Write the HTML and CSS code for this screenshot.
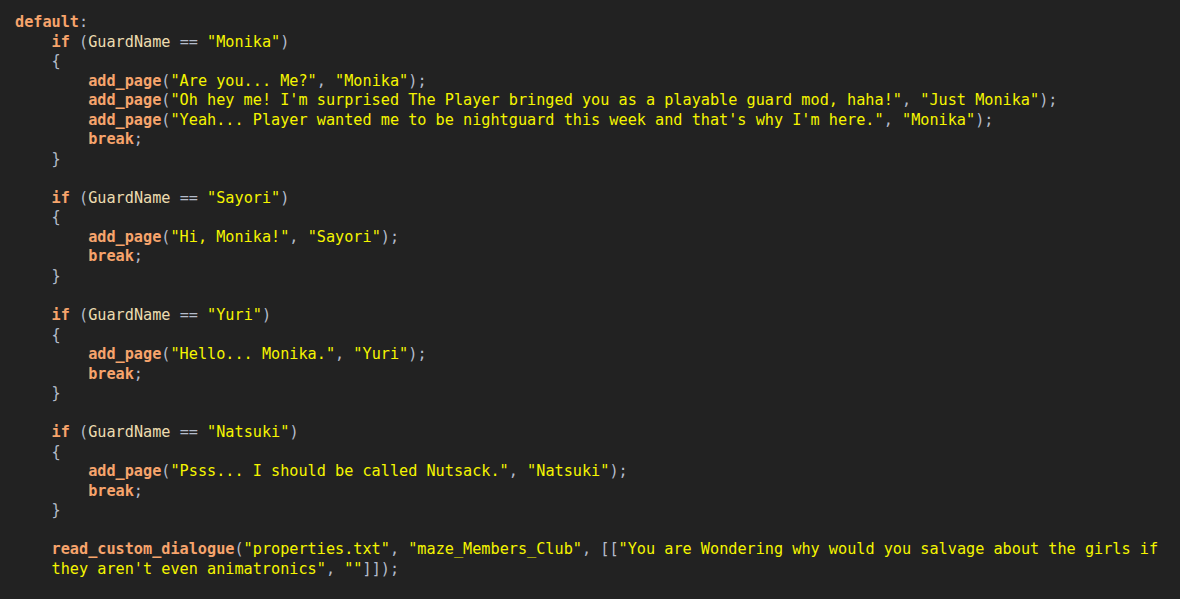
FILE: index.html
```html
<!DOCTYPE html>
<html>
<head>
<meta charset="utf-8">
<link rel="stylesheet" href="styles.css">
</head>
<body>
<div class="code">
<div class="ln"><span class="kw">default</span><span class="p">:</span></div>
<div class="ln i1"><span class="kw">if</span> <span class="p">(</span><span class="id">GuardName</span> <span class="p">==</span> <span class="s">"Monika"</span><span class="p">)</span></div>
<div class="ln i1"><span class="p">{</span></div>
<div class="ln i2"><span class="kw">add_page</span><span class="p">(</span><span class="s">"Are you... Me?"</span><span class="p">,</span> <span class="s">"Monika"</span><span class="p">);</span></div>
<div class="ln i2"><span class="kw">add_page</span><span class="p">(</span><span class="s">"Oh hey me! I'm surprised The Player bringed you as a playable guard mod, haha!"</span><span class="p">,</span> <span class="s">"Just Monika"</span><span class="p">);</span></div>
<div class="ln i2"><span class="kw">add_page</span><span class="p">(</span><span class="s">"Yeah... Player wanted me to be nightguard this week and that's why I'm here."</span><span class="p">,</span> <span class="s">"Monika"</span><span class="p">);</span></div>
<div class="ln i2"><span class="kw">break</span><span class="p">;</span></div>
<div class="ln i1"><span class="p">}</span></div>
<div class="ln"> </div>
<div class="ln i1"><span class="kw">if</span> <span class="p">(</span><span class="id">GuardName</span> <span class="p">==</span> <span class="s">"Sayori"</span><span class="p">)</span></div>
<div class="ln i1"><span class="p">{</span></div>
<div class="ln i2"><span class="kw">add_page</span><span class="p">(</span><span class="s">"Hi, Monika!"</span><span class="p">,</span> <span class="s">"Sayori"</span><span class="p">);</span></div>
<div class="ln i2"><span class="kw">break</span><span class="p">;</span></div>
<div class="ln i1"><span class="p">}</span></div>
<div class="ln"> </div>
<div class="ln i1"><span class="kw">if</span> <span class="p">(</span><span class="id">GuardName</span> <span class="p">==</span> <span class="s">"Yuri"</span><span class="p">)</span></div>
<div class="ln i1"><span class="p">{</span></div>
<div class="ln i2"><span class="kw">add_page</span><span class="p">(</span><span class="s">"Hello... Monika."</span><span class="p">,</span> <span class="s">"Yuri"</span><span class="p">);</span></div>
<div class="ln i2"><span class="kw">break</span><span class="p">;</span></div>
<div class="ln i1"><span class="p">}</span></div>
<div class="ln"> </div>
<div class="ln i1"><span class="kw">if</span> <span class="p">(</span><span class="id">GuardName</span> <span class="p">==</span> <span class="s">"Natsuki"</span><span class="p">)</span></div>
<div class="ln i1"><span class="p">{</span></div>
<div class="ln i2"><span class="kw">add_page</span><span class="p">(</span><span class="s">"Psss... I should be called Nutsack."</span><span class="p">,</span> <span class="s">"Natsuki"</span><span class="p">);</span></div>
<div class="ln i2"><span class="kw">break</span><span class="p">;</span></div>
<div class="ln i1"><span class="p">}</span></div>
<div class="ln"> </div>
<div class="ln i1"><span class="kw">read_custom_dialogue</span><span class="p">(</span><span class="s">"properties.txt"</span><span class="p">,</span> <span class="s">"maze_Members_Club"</span><span class="p">,</span> <span class="p">[[</span><span class="s">"You are Wondering why would you salvage about the girls if</span></div>
<div class="ln i1"><span class="s">they aren't even animatronics"</span><span class="p">,</span> <span class="s">""</span><span class="p">]]);</span></div>
</div>
</body>
</html>
```

FILE: styles.css
```css
html, body {
  margin: 0;
  padding: 0;
  background: #222222;
  height: 100%;
}
.code {
  padding: 13px 0 0 15px;
  font-family: "DejaVu Sans Mono", "Liberation Mono", monospace;
  font-size: 15.2px;
  line-height: 19.54px;
  color: #d0d4dc;
}
.ln {
  white-space: pre;
  height: 19.54px;
}
.i1 { padding-left: 4ch; }
.i2 { padding-left: 8ch; }
.kw { color: #f7a46c; font-weight: bold; }
.p { color: #b4bccb; }
.id { color: #ecdcb0; }
.s { color: #f5f500; }
```
